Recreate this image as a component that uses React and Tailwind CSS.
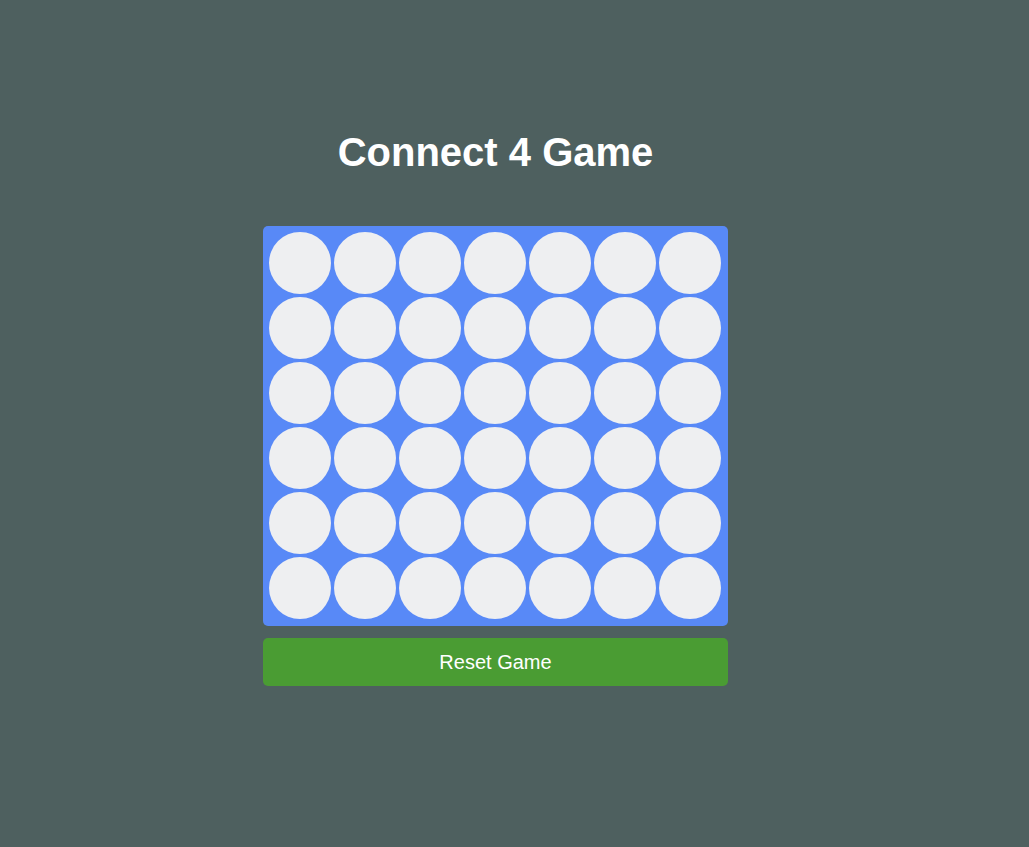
export default function App() {
  const rows = Array.from({ length: 6 });
  const cols = Array.from({ length: 7 });

  return (
    <div
      className="min-h-screen bg-[#4e605f] pr-[38px] pt-[127px]"
      style={{ fontFamily: '"Liberation Sans", Arial, sans-serif' }}
    >
      <div className="flex flex-col items-center">
        <h1 className="text-[40px] leading-[50px] font-bold text-white">Connect 4 Game</h1>

        <div className="mt-[49px] flex w-[465px] flex-col gap-[3px] rounded-[5px] bg-[#5889f7] pt-[6px] pr-[7px] pb-[7px] pl-[6px]">
          {rows.map((_, r) => (
            <div key={r} className="flex gap-[3px]">
              {cols.map((_, c) => (
                <div key={c} className="h-[62px] w-[62px] rounded-full bg-[#eeeff1]" />
              ))}
            </div>
          ))}
        </div>

        <button
          type="button"
          className="mt-[12px] h-[48px] w-[465px] rounded-[5px] bg-[#4a9c33] text-[20px] text-white"
        >
          Reset Game
        </button>
      </div>
    </div>
  );
}
